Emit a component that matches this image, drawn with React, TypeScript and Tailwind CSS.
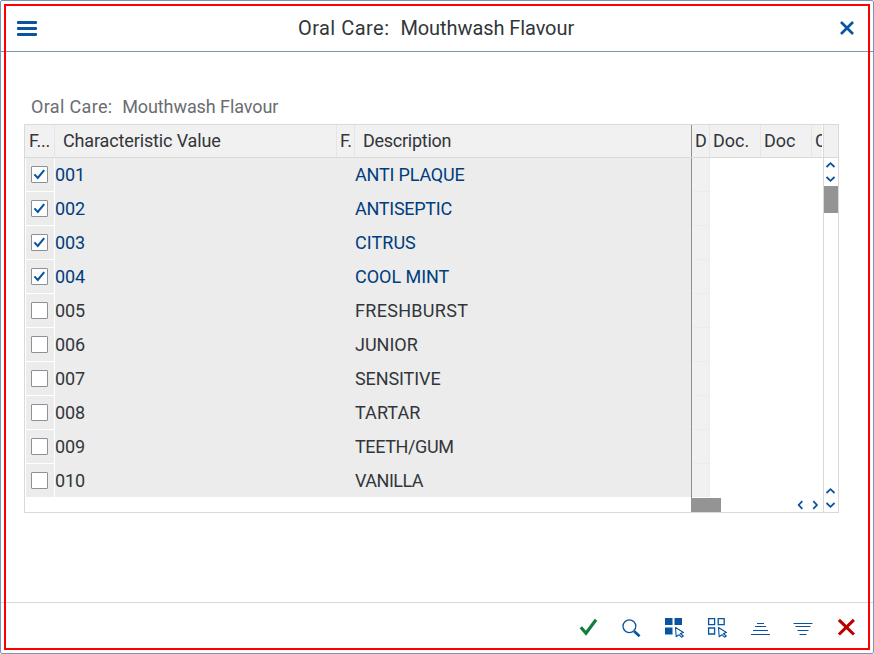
import type { ReactNode } from "react";

type Row = { code: string; name: string; checked: boolean; nameSpacing: string };

const rows: Row[] = [
  { code: "001", name: "ANTI PLAQUE", checked: true, nameSpacing: "tracking-[-0.18px]" },
  { code: "002", name: "ANTISEPTIC", checked: true, nameSpacing: "tracking-[-0.27px]" },
  { code: "003", name: "CITRUS", checked: true, nameSpacing: "tracking-[0.05px]" },
  { code: "004", name: "COOL MINT", checked: true, nameSpacing: "tracking-[-0.03px]" },
  { code: "005", name: "FRESHBURST", checked: false, nameSpacing: "tracking-[0.3px]" },
  { code: "006", name: "JUNIOR", checked: false, nameSpacing: "tracking-[0px]" },
  { code: "007", name: "SENSITIVE", checked: false, nameSpacing: "tracking-[-0.1px]" },
  { code: "008", name: "TARTAR", checked: false, nameSpacing: "tracking-[0.05px]" },
  { code: "009", name: "TEETH/GUM", checked: false, nameSpacing: "tracking-[-0.38px]" },
  { code: "010", name: "VANILLA", checked: false, nameSpacing: "tracking-[-0.5px]" },
];

function Chevron({ d }: { d: string }) {
  return (
    <svg width="14" height="14" viewBox="0 0 14 14" fill="none" stroke="#0854a0" strokeWidth="1.8" className="block shrink-0">
      <path d={d} />
    </svg>
  );
}
const UP = "M2.5 9 L6.5 5.2 L10.5 9";
const DOWN = "M2.5 5 L6.5 8.8 L10.5 5";
const LEFT = "M9.3 3.2 L5.7 7 L9.3 10.800";
const RIGHT = "M5.3 3.2 L8.9 7 L5.3 10.800";

function HeadCell({ className, children }: { className: string; children?: ReactNode }) {
  return (
    <div className={`h-full shrink-0 overflow-hidden whitespace-nowrap bg-[#f1f1f1] leading-[31px] ${className}`}>{children}</div>
  );
}

function Checkbox({ checked }: { checked: boolean }) {
  return (
    <div className="h-[17px] w-[17px] rounded-[1px] border border-[#89919a] bg-white">
      {checked && (
        <svg width="15" height="15" viewBox="0 0 15 15" fill="none" stroke="#0854a0" strokeWidth="2.100" className="block">
          <path d="M2.4 7.4 L5.800 11 L12.2 3.2" />
        </svg>
      )}
    </div>
  );
}

function ToolIcon({ children }: { children: ReactNode }) {
  return (
    <svg width="24" height="24" viewBox="0 0 24 24" fill="none" className="block shrink-0">
      {children}
    </svg>
  );
}

function Pointer() {
  return (
    <path
      d="M13.500 11.500 L21.500 16.500 L18.3 17.500 L21.300 20 L19.500 21.200 L16.900 18.700 L14.200 20.700 Z"
      stroke="#0854a0"
      strokeWidth="1.100"
      strokeLinejoin="round"
    />
  );
}

export default function App() {
  return (
    <div className="relative flex h-[654px] w-[874px] flex-col rounded-[2px] border border-[#7b95b5] bg-white font-['Roboto','Liberation_Sans',sans-serif] text-[18px] text-[#32363a]">
      <header className="flex h-[51px] shrink-0 items-center border-b border-[#7b95b5] pl-4 pr-[19px]">
        <svg width="20" height="17" viewBox="0 0 20 17" className="mt-1 block" fill="#0854a0">
          <rect y="1" width="20" height="3" rx="1" />
          <rect y="7" width="20" height="3" rx="1" />
          <rect y="13" width="20" height="3" rx="1" />
        </svg>
        <h1 className="mt-[3px] flex-1 whitespace-pre pr-[5px] text-center text-[20px]">
          <span className="tracking-[0.48px]">{"Oral Care:  "}</span>
          <span className="tracking-[-0.08px]">Mouthwash Flavour</span>
        </h1>
        <svg width="14" height="14" viewBox="0 0 14 14" className="mt-1 block" stroke="#0854a0" strokeWidth="2.700">
          <path d="M1 1 L13 13 M13 1 L1 13" />
        </svg>
      </header>

      <main className="flex flex-1 flex-col pl-[23px]">
        <div className="mt-[41px] h-[31px] whitespace-pre pl-[7px] leading-[28px] text-[#6a6d70]">
          <span className="tracking-[0.34px]">{"Oral Care:  "}</span>
          <span className="tracking-[-0.08px]">Mouthwash Flavour</span>
        </div>
        <section className="flex h-[389px] w-[815px] border border-[#d9d9d9]">
          <div className="flex w-[798px] shrink-0 flex-col">
            <div className="flex h-[33px] shrink-0 border-b border-[#d9d9d9]">
              <HeadCell className="w-[30px] border-r border-[#e5e5e5] pl-1 tracking-[-0.3px]">F...</HeadCell>
              <HeadCell className="w-[282px] border-r border-[#e5e5e5] pl-2 tracking-[-0.14px]">Characteristic Value</HeadCell>
              <HeadCell className="w-[18px] border-r border-[#e5e5e5] pl-[3px] tracking-[-0.6px]">F.</HeadCell>
              <HeadCell className="w-[336px] pl-2 tracking-[-0.27px]">Description</HeadCell>
              <HeadCell className="w-[19px] border-l border-r border-l-[#919191] border-r-[#e5e5e5] pl-[3px]">D</HeadCell>
              <HeadCell className="w-[51px] border-r border-[#e5e5e5] pl-[3px]">Doc.</HeadCell>
              <HeadCell className="w-[51px] border-r border-[#e5e5e5] pl-[3px]">Doc</HeadCell>
              <HeadCell className="w-[10px] pl-[3px]">C</HeadCell>
            </div>
            <div className="flex h-[340px] shrink-0">
              <div className="w-[666px] border-l border-white">
                {rows.map((r) => (
                  <div key={r.code} className={`flex h-[34px] leading-[33px] ${r.checked ? "text-[#003d7c]" : "text-[#32363a]"}`}>
                    <div className="h-[33px] w-7 shrink-0 bg-[#ececec] pl-[5px] pt-2">
                      <Checkbox checked={r.checked} />
                    </div>
                    <div className={`ml-px w-[300px] shrink-0 bg-[#ececec] tracking-[-0.1px] ${r.code === "010" ? "h-[33px]" : "h-[34px]"}`}>{r.code}</div>
                    <div className={`flex-1 bg-[#ececec] ${r.nameSpacing} ${r.code === "010" ? "h-[33px]" : "h-[34px]"}`}>{r.name}</div>
                  </div>
                ))}
              </div>
              <div className="w-[19px] border-l border-[#919191]">
                {rows.map((r) => (
                  <div key={r.code} className={`border-r border-[#ececec] bg-[#f1f1f1] ${r.code === "010" ? "h-[33px]" : "h-[34px] border-b"}`} />
                ))}
              </div>
            </div>
            <div className="flex h-[14px] items-center">
              <div className="ml-[666px] h-[14px] w-[30px] bg-[#949494]" />
              <div className="ml-[72px] flex gap-[1px]">
                <Chevron d={LEFT} />
                <Chevron d={RIGHT} />
              </div>
            </div>
          </div>
          <div className="flex w-[15px] flex-col border-l border-[#d9d9d9]">
            <div className="h-[33px] shrink-0 border-b border-[#d9d9d9] bg-[#f1f1f1]" />
            <Chevron d={UP} />
            <Chevron d={DOWN} />
            <div className="h-[27px] bg-[#949494]" />
            <div className="flex-1" />
            <Chevron d={UP} />
            <Chevron d={DOWN} />
          </div>
        </section>
      </main>

      <footer className="flex h-[51px] shrink-0 items-center justify-end gap-[19px] border-t border-[#d9d9d9] pr-[15px]">
        <ToolIcon>
          <path d="M4.800 11.200 L10 17.200 L20 3.800" stroke="#107e3e" strokeWidth="3.200" />
        </ToolIcon>
        <ToolIcon>
          <circle cx="10.400" cy="10.300" r="6.400" stroke="#0854a0" strokeWidth="1.300" />
          <path d="M15.200 15.200 L20.600 20.300" stroke="#0854a0" strokeWidth="2.600" />
        </ToolIcon>
        <ToolIcon>
          <path d="M3 2h7.500v7H3zM12.500 2h7.500v7h-7.500zM3 11.500h7.500v7H3z" fill="#0854a0" />
          <Pointer />
        </ToolIcon>
        <ToolIcon>
          <path d="M3.600 2.600h6v6h-6zM13.200 2.600h6v6h-6zM3.600 12h6v6h-6z" stroke="#0854a0" strokeWidth="1.300" />
          <Pointer />
        </ToolIcon>
        <ToolIcon>
          <path d="M9 7.500h7M7 10.500h11M5 14.500h15M3 18.500h19" stroke="#0854a0" />
        </ToolIcon>
        <ToolIcon>
          <path d="M2.500 7.500h19M4.500 10.500h15M6.500 14.500h11M8.500 18.500h7" stroke="#0854a0" />
        </ToolIcon>
        <ToolIcon>
          <path d="M4.900 3.800 L19.900 18.500 M19.900 3.800 L4.900 18.500" stroke="#bb0000" strokeWidth="3.100" />
        </ToolIcon>
      </footer>
      <div className="pointer-events-none absolute left-[3px] top-[3px] h-[646px] w-[866px] border-2 border-[#ff0000]" />
    </div>
  );
}
